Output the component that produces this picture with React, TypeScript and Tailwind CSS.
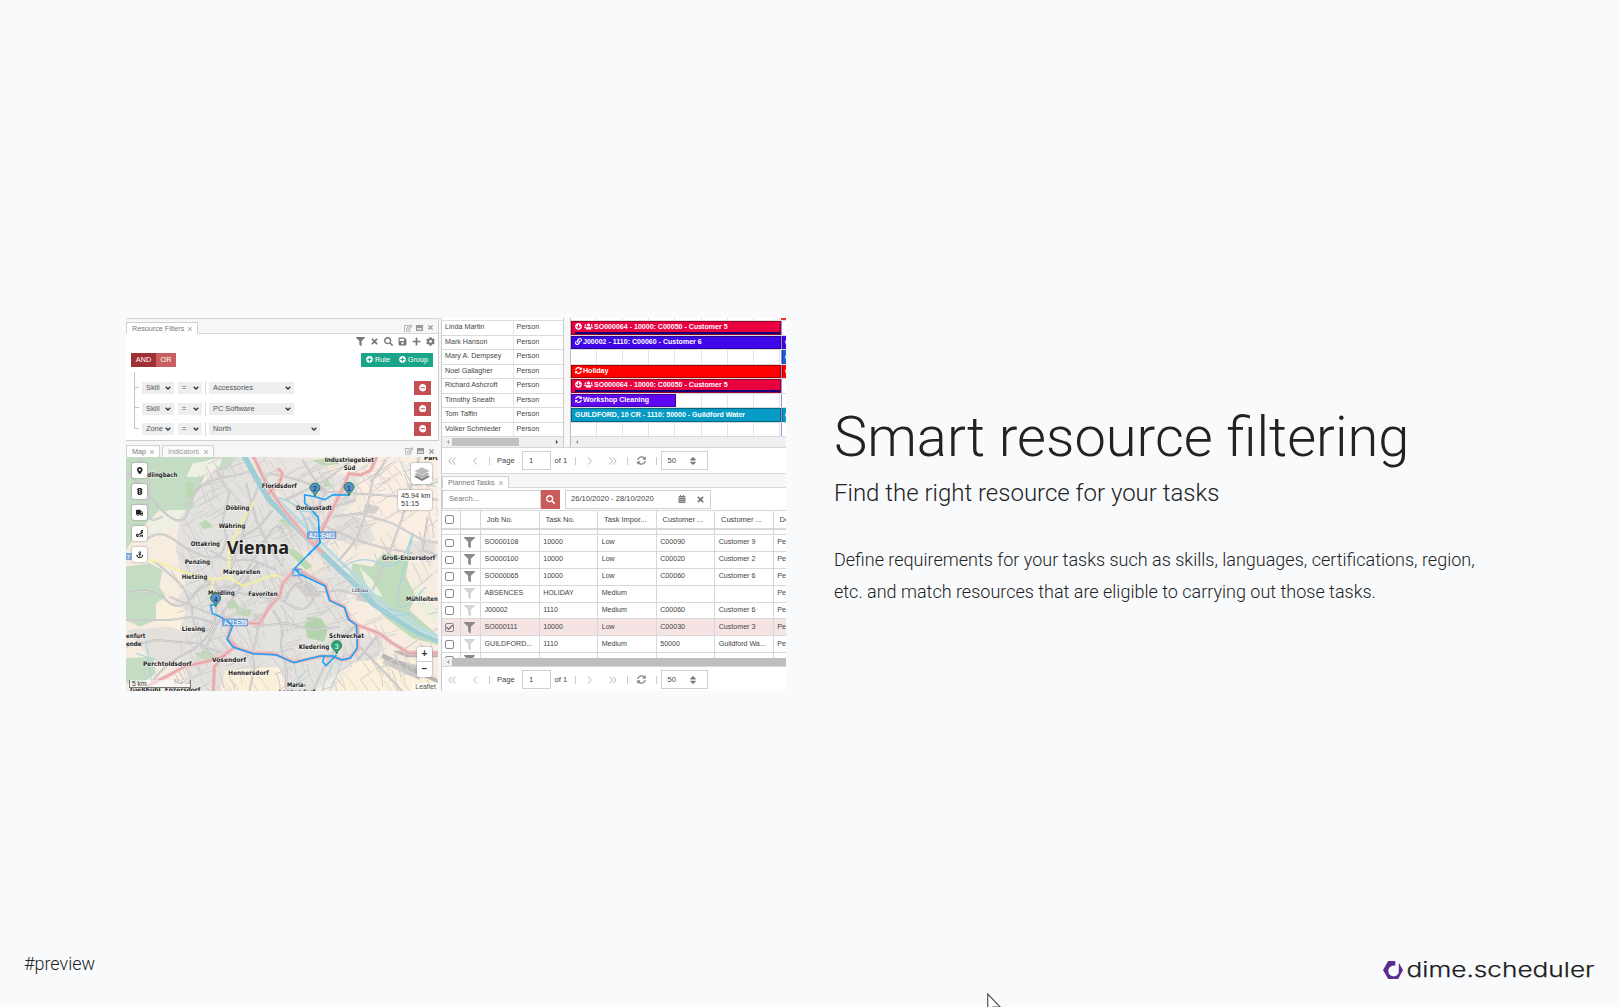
import React from "react";
import {
  FaFilter, FaTimes, FaSearch, FaSave, FaPlus, FaCog, FaPlusCircle, FaMinusCircle, FaSyncAlt,
  FaCalendarAlt, FaUsers, FaLink, FaMapMarkerAlt, FaTruck, FaRoute, FaAnchor, FaTrafficLight,
  FaArrowCircleDown, FaRegEdit, FaCaretLeft, FaCaretRight, FaCheck, FaSort,
} from "react-icons/fa";

function Tab({ label, width, active = true }: { label: string; width: string; active?: boolean }) {
  return (
    <div className={`${width} flex items-center justify-between border border-b-0 border-[#d0d0d0] pl-[5px] pr-[4px] text-[7.2px] ${active ? "bg-white text-[#777]" : "bg-[#fafafa] text-[#999]"}`}>
      <span>{label}</span>
      <FaTimes className="size-[6px] text-[#bbb]" />
    </div>
  );
}

function PanelTools() {
  return (
    <div className="ml-auto flex items-center gap-[4px] pr-[4px] text-[#999]">
      <FaRegEdit className="size-[8px]" />
      <div className="h-[6px] w-[7px] border border-[#999] border-t-[3px] bg-[#ddd]" />
      <FaTimes className="size-[7px]" />
    </div>
  );
}

function Select({ text, width }: { text: string; width: string }) {
  return (
    <div className={`${width} flex h-[12px] items-center justify-between bg-[#edeeef] pl-[4px] pr-[3px] text-[7.4px] text-[#555]`}>
      <span>{text}</span>
      <svg viewBox="0 0 6 4" className="h-[4px] w-[6px]"><path d="M0.700 0.700L3 3 5.300 0.700" fill="none" stroke="#333" strokeWidth="1.300" /></svg>
    </div>
  );
}

function Rule({ field, value, width, last = false }: { field: string; value: string; width: string; last?: boolean }) {
  return (
    <div className="flex h-[20.4px] items-center">
      <div className="flex h-full w-[8px] flex-col">
        <div className="h-[10px] w-[5px] border-b border-l border-[#c4c4c4]" />
        <div className={last ? "flex-1" : "w-[5px] flex-1 border-l border-[#c4c4c4]"} />
      </div>
      <Select text={field} width="w-[32px]" />
      <div className="w-[4px]" />
      <Select text="=" width="w-[24px]" />
      <div className="mx-[3px] h-[14px] w-px bg-[#ddd]" />
      <Select text={value} width={width} />
      <div className="ml-auto flex h-[14px] w-[17px] items-center justify-center bg-[#c54e52] text-white">
        <FaMinusCircle className="size-[7.5px]" />
      </div>
    </div>
  );
}

function Filters() {
  return (
    <section className="flex h-[123px] flex-col border-r border-b border-[#d0d0d0] bg-white">
      <div className="flex h-[16px] border-t border-b border-[#d8d8d8] bg-[#f6f6f6] pt-[3px]">
        <div className="-mb-px flex"><Tab label="Resource Filters" width="w-[72px]" /></div>
        <PanelTools />
      </div>
      <div className="flex h-[14px] items-center justify-end gap-[5px] pr-[3px] text-[#777]">
        <FaFilter className="size-[9px]" />
        <FaTimes className="size-[9px]" />
        <FaSearch className="size-[9px]" />
        <FaSave className="size-[9px]" />
        <FaPlus className="size-[9px]" />
        <FaCog className="size-[9px]" />
      </div>
      <div className="mt-[5px] flex h-[14px] justify-between pl-[5px] pr-[5px] text-[7.3px] text-white">
        <div className="flex">
          <div className="flex w-[25px] items-center justify-center bg-[#9f3033]">AND</div>
          <div className="flex w-[20px] items-center justify-center bg-[#c95f60]">OR</div>
        </div>
        <div className="flex w-[72px] items-center justify-between bg-[#19a589] px-[5px]">
          <span className="flex items-center gap-[2px]"><FaPlusCircle className="size-[7px]" />Rule</span>
          <span className="flex items-center gap-[2px]"><FaPlusCircle className="size-[7px]" />Group</span>
        </div>
      </div>
      <div className="flex flex-col pl-[8px] pr-[7px]">
        <div className="mt-[5px] h-[6px] w-px bg-[#c4c4c4]" />
        <Rule field="Skill" value="Accessories" width="w-[85px]" />
        <Rule field="Skill" value="PC Software" width="w-[85px]" />
        <Rule field="Zone" value="North" width="w-[111px]" last />
      </div>
    </section>
  );
}

const seeded = (seed: number) => () => {
  seed = (seed * 16807) % 2147483647;
  return seed / 2147483647;
};

/* Small street blocks scattered over the built-up area, in map units. */
const streets = (() => {
  const r = seeded(4211);
  let d = "";
  for (let i = 0; i < 420; i++) {
    const x = 130 + r() * 800;
    const y = 60 + r() * 690;
    const inCity = x + y * 0.2 > 210 && !(x > 640 && y > 330 && y < 560 && x - y < 380);
    if (!inCity || (x > 760 && r() > 0.4)) continue;
    const a = (r() > 0.5 ? 1.15 : -0.45) + (r() - 0.5) * 0.5;
    const l = 25 + r() * 60;
    d += `M${x.toFixed(0)} ${y.toFixed(0)}q${(Math.cos(a) * l * 0.5 + r() * 9).toFixed(0)} ${(Math.sin(a) * l * 0.5).toFixed(0)} ${(Math.cos(a) * l).toFixed(0)} ${(Math.sin(a) * l).toFixed(0)}`;
  }
  return d;
})();

const RIVER = "M350 40L400 130 430 180 490 240 560 310 620 370 680 425 740 490 800 530 870 575 945 605";
const MOTORWAYS =
  "M380 45L420 130 470 205 540 290 590 340M455 85l14 14-8 28-35 35M752 51l-18 40-30 14-36-4-12 30-28 60-30 60-28 60M510 385L470 430 462 465 425 510 400 552 360 548M510 385L545 405 600 435 612 480 655 500 672 540 695 555 760 580 800 610 850 640 945 640M262 755L265 680 300 640 330 618 305 595 315 560 290 530M300 645L240 665 175 680 120 710 60 740M320 618L380 640 440 640 505 666 590 648 660 660 695 630 695 555";

const MINOR =
  "M0 95Q60 150 90 190T150 240 190 200 240 130 300 110 370 95M40 51Q80 120 66 190T110 230M60 300Q100 265 145 300T240 350 300 300M80 360Q130 400 160 430T200 530 260 560M0 460Q80 440 120 480T200 470 270 440 370 420M0 540H130L200 530 270 550M0 620L90 600 210 610 290 640M60 755Q100 680 180 640T270 520 310 440 400 330 470 280M230 640L290 520 350 430 395 370M370 755L385 680 380 640 400 552 440 470M480 755L482 690 465 620 470 555 440 510M560 755L590 690 650 590 690 555M400 130L370 210 345 300 310 400M430 100L520 120 600 155 760 165 945 180M530 60L560 110 600 155 560 230M480 180L600 120 680 60M600 260L690 300 760 320 860 340M620 230L700 220 800 250 890 300 945 310M880 51L860 120 830 230 790 340 740 450M780 60L740 120 720 220 690 300 640 360M905 230L890 330 945 350M560 310L620 200 690 180M695 660L760 580M700 620L760 680 830 755M510 400L560 460 640 450 720 470M480 480Q500 420 540 430T560 480 500 500 460 470M380 560L480 550 560 570 640 560M250 330L300 360 380 360 450 390M200 400L290 450 400 470 480 480M270 90L310 160 290 240 310 330M360 130L390 240 430 320 470 380M440 210L400 260 350 290M130 470L250 520 360 548";

const places: [string, number, number, number][] = [
  ["dlingbach", 64, 112, 90], ["Floridsdorf", 407, 144, 105], ["Industriegebiet", 596, 65, 148], ["Süd", 653, 89, 35],
  ["Döbling", 299, 210, 71], ["Donaustadt", 510, 210, 108], ["Währing", 278, 264, 80],
  ["Ottakring", 194, 317, 88], ["Penzing", 176, 373, 76], ["Groß-Enzersdorf", 768, 360, 160], ["Hietzing", 167, 418, 77],
  ["Margareten", 291, 402, 112], ["Favoriten", 367, 469, 88], ["Meidling", 246, 466, 80], ["Mühlleiten", 840, 482, 95],
  ["Liesing", 167, 572, 71], ["enfurt", 0, 595, 58], ["ende", 0, 619, 47], ["Schwechat", 609, 593, 105], ["Kledering", 518, 626, 92],
  ["Vösendorf", 258, 665, 102], ["Perchtoldsdorf", 51, 679, 146], ["Hennersdorf", 307, 705, 121], ["Maria-", 483, 740, 56],
];
const edgePlaces: [string, number, number, number][] = [
  ["Parti", 894, 60, 48], ["Gießhübl", 12, 757, 92], ["Enzersdorf", 116, 757, 107], ["Lanzendorf", 458, 763, 110],
];

function Pin({ x, y, n, green = false }: { x: number; y: number; n: string; green?: boolean }) {
  return (
    <g>
      <path d={`M${x} ${y}c-2-13-15-14-15-25a15 15 0 0 1 30 0c0 11-13 12-15 25z`} fill={green ? "#2ba57b" : "#5a8fd0"} stroke="#1b8a3c" strokeWidth="3" />
      <text x={x} y={y - 15} fontSize="21" textAnchor="middle" fill={green ? "#fff" : "#123"} fontFamily="Liberation Sans, sans-serif">{n}</text>
    </g>
  );
}

function MapView() {
  return (
    <svg viewBox="0 51 936 702" className="block h-[234px] w-[312px]">
      <rect y="51" width="940" height="710" fill="#f6ecdf" />
      {/* built-up area */}
      <path d="M160 230L290 51 360 51 420 150 620 360 690 430 640 500 700 560 690 660 560 755 200 755 150 620 120 520 180 440 150 330z" fill="#e4e2de" />
      <path d="M390 51L560 55 620 100 700 110 690 180 640 230 600 320 540 290z" fill="#e8e5e0" />
      <path d="M0 570l130-10 60 60-50 60-60-20zM620 210l100 30 30 60-60 20-70-30zM850 300l80 10-10 60-80-20zM700 575l70 30-20 60-60 10z" fill="#e4e0dc" />
      <path d="M700 51h240v230l-110 10-70-90-50-30z" fill="#fbeee2" />
      <path d="M500 320l110 40-20 50-80-20zM560 190l50 20 0 40-45-10z" fill="#efe7db" />
      <path d="M700 660h180l60 60v35H620zM300 690l160-10 20 75H280zM120 480l60 30-20 60-80-30z" fill="#fbf0d9" />
      {/* forest and parks */}
      <path d="M0 51h330l-30 40-50-10-20 40-30 60 10 20-50 20-60-10-60 60-40 60H0z" fill="#c3dcc3" />
      <path d="M290 51l-10 30-60 30-40 0 20-40zM70 240l60-30 50 0-50 60-60 20z" fill="#eef0e2" />
      <path d="M0 380l70-10 40 20-10 50 20 30-30 20 0 50-50 20-40-20zM0 655l80-5 10 50-40 30H0z" fill="#c3dcc3" />
      <path d="M680 370l60 10 30-40 80 10-10 60 30 60-20 40 90 80v25l-80-20-80-60-110-120z" fill="#c0dcbc" />
      <path d="M700 380l40 40 30 50-40-10zM860 420l70 90v40l-60-60z" fill="#eaf0dc" />
      <path d="M545 530l40 5 20 30-10 40-50-10-10-40z" fill="#b3d3ac" />
      <path d="M470 320l40 10 50 50-20 10zM220 250l20-10 22 20-30 8zM330 500l50 10-10 20-40-6zM300 485l25-5 15 20-30 10zM560 60l70-8 10 20-50 6zM460 240l30-10 10 30-25 0zM180 130l20-4 4 40-24 10zM600 110l20 30-30 0zM210 640l40-10 20 20-40 10z" fill="#bbd9ae" />
      <path d="M500 430l60 10 30 30-50 0zM720 190l40 10-10 20-40 0zM380 520l30 0 6 40-30 0zM700 440l40 20-10 30-40-10z" fill="#d2cfcd" />
      <path d="M780 650l110 30-10 40-110-50z" fill="#cac8c6" />
      <path d="M770 640l170 80-3 10-170-76zM800 632h140v20H840z" fill="#b7b6b5" />
      {/* streets */}
      <path d={streets} fill="none" stroke="#cfcecd" strokeWidth="3" />
      <path d={streets} transform="translate(22 -16)" fill="none" stroke="#d6d4d3" strokeWidth="2.5" />
      <path d={MINOR} fill="none" stroke="#bdbcbe" strokeWidth="6" />
      <path d={MINOR} fill="none" stroke="#dddbdc" strokeWidth="3" />
      <path d="M66 358L110 370 165 395 260 418 310 412 350 438 400 420 440 405 465 410M255 455L262 418M310 412L308 330 350 240 385 185" fill="none" stroke="#f4f0a0" strokeWidth="6" />
      {/* water */}
      <g fill="none" strokeLinejoin="round" stroke="#a9d3df">
        <path d={RIVER} stroke="#9fced6" strokeWidth="17" />
        <path d={RIVER} transform="translate(24 -4)" stroke="#b9dce4" strokeWidth="9" />
        <path d={RIVER} transform="translate(12 -2)" stroke="#dfe9e2" strokeWidth="3" />
        <path d="M440 170Q520 180 540 250T510 260 470 200M545 235q30 20 20 60M520 215q40 -10 60 30" strokeWidth="5" />
        <path d="M640 390Q700 340 760 370T850 310 830 400 900 440M660 410Q720 440 750 490T850 520M770 510q60-10 100 30" strokeWidth="4" />
        <path d="M640 650Q600 690 590 755M655 640Q640 700 610 755M540 690l-50 65M60 600L80 755M30 640l60 20M820 60l30 60 80 20" strokeWidth="3" />
      </g>
      {/* motorways */}
      <g fill="none" strokeLinejoin="round">
        <path d={MOTORWAYS} stroke="#eebfc0" strokeWidth="12" />
        <path d={MOTORWAYS} stroke="#dd9094" strokeWidth="2.5" />
      </g>
      {/* driving route */}
      <path d="M669 165L621 164 597 179 567 170 536 164 536 188 577 232 582 308 505 386 522 402 597 438 611 482 655 502 667 538 691 555 694 622 674 654 646 660 622 648 582 648 502 668 452 645 382 641 322 622 303 598 320 558 282 530 259 520 254 496 268 494M631 645L600 677 590 665 594 650" fill="none" stroke="#16a0f8" strokeWidth="4.5" strokeLinejoin="round" />
      <g fontFamily="Liberation Sans, sans-serif" fontSize="19" fontWeight="bold" fill="#fff" fillOpacity="0.9">
        <rect x="543" y="274" width="88" height="23" fill="#6f9dd6" /><text x="548" y="293" textLength="79">A23;E461</text>
        <rect x="499" y="386" width="28" height="23" fill="#6f9dd6" /><text x="502" y="405">A4</text>
        <rect x="288" y="536" width="78" height="23" fill="#6f9dd6" /><text x="293" y="555" textLength="70">A21;E59</text>
        <rect x="-10" y="339" width="27" height="21" fill="#6f9dd6" /><text x="2" y="357" fontSize="17">7</text>
      </g>
      <path d="M577 260L582 308 545 346M505 386L522 402 540 411M320 558L300 540" fill="none" stroke="#16a0f8" strokeWidth="4.500" />
      <g fontFamily="DejaVu Sans, sans-serif" fontSize="19" fontWeight="bold" fill="#222" stroke="#fff" strokeOpacity="0.6" strokeWidth="4" paintOrder="stroke">
        {places.concat(edgePlaces).map(([t, x, y, w]) => <text key={t} x={x} y={y} textLength={w} lengthAdjust="spacingAndGlyphs">{t}</text>)}
        <text x="302" y="343" fontFamily="Noto Sans, sans-serif" fontSize="54" textLength="187" lengthAdjust="spacingAndGlyphs">Vienna</text>
        <text x="677" y="455" fontWeight="normal" fontSize="18" fill="#445" textLength="49">Lobau</text>
        <text x="143" y="732" fontWeight="normal" fontSize="19" fill="#444" textLength="52">Maria</text>
      </g>
      <Pin x={567} y={169} n="2" />
      <Pin x={669} y={167} n="1" />
      <Pin x={269} y={500} n="4" />
      <Pin x={632} y={642} n="3" green />
    </svg>
  );
}

function MapPanel() {
  const tools = [FaMapMarkerAlt, FaTrafficLight, FaTruck, FaRoute, FaAnchor];
  return (
    <section className="flex h-[250px] flex-col">
      <div className="flex h-[16px] gap-[2px] bg-[#f6f6f6] pt-[4px]">
        <Tab label="Map" width="w-[34px]" />
        <Tab label="Indicators" width="w-[52px]" active={false} />
        <PanelTools />
      </div>
      <div className="relative">
        <MapView />
        <div className="absolute top-[6px] left-[6px] flex flex-col gap-[6px]">
          {tools.map((Icon, i) => (
            <div key={i} className="flex size-[15px] items-center justify-center rounded-[2px] bg-white shadow-[0_0_2px_#777]">
              <Icon className="size-[7.5px] text-[#222]" />
            </div>
          ))}
        </div>
        <div className="absolute top-[6px] right-[7px] flex size-[21px] items-center justify-center rounded-[3px] bg-white shadow-[0_0_2px_#777]">
          <svg viewBox="0 0 18 18" className="size-[18px]">
            <path d="M9 7.500l8 4-8 4.500-8-4.500z" fill="#777" />
            <path d="M9 5l8 4-8 4.500-8-4.500z" fill="#aaa" stroke="#fff" strokeWidth="0.500" />
            <path d="M9 2l8 4-8 4.500-8-4.500z" fill="#bbb" stroke="#fff" strokeWidth="0.500" />
          </svg>
        </div>
        <div className="absolute top-[33px] right-[7px] flex h-[20px] w-[34px] flex-col justify-center rounded-[2px] bg-white pl-[3px] text-[7.2px] leading-[8.500px] whitespace-nowrap text-[#333] shadow-[0_0_2px_#777]">
          <span>45.94 km</span>
          <span>51:15</span>
        </div>
        <div className="absolute right-[7px] bottom-[14px] flex w-[15px] flex-col rounded-[2px] bg-white text-center text-[10px] font-bold text-[#333] shadow-[0_0_2px_#777]">
          <span className="h-[15px] border-b border-[#ccc] leading-[14px]">+</span>
          <span className="h-[15px] leading-[14px]">−</span>
        </div>
        <div className="absolute right-0 bottom-0 bg-white/75 px-[3px] text-[6.9px] leading-[8px] text-[#555]">Leaflet</div>
        <div className="absolute bottom-[3px] left-[3px] h-[8px] w-[62px] border border-t-0 border-[#777] bg-white/50 pl-[2px] text-[6.7px] leading-[8px] text-[#333]">5 km</div>
      </div>
    </section>
  );
}

type Bar = { label?: string; color?: string; width?: string; icons?: "alert" | "link" | "sync"; load?: boolean; tail?: string };
const people: [string, Bar][] = [
  ["Linda Martin", { label: "SO000064 - 10000: C00050 - Customer 5", color: "bg-[#e9013f]", icons: "alert", load: true }],
  ["Mark Hanson", { label: "J00002 - 1110: C00060 - Customer 6", color: "bg-[#3f06ea]", icons: "link", tail: "bg-[#3f06ea]" }],
  ["Mary A. Dempsey", { tail: "bg-[#1565e0]" }],
  ["Noel Gallagher", { label: "Holiday", color: "bg-[#ff0000]", icons: "sync", tail: "bg-[#ff0000]" }],
  ["Richard Ashcroft", { label: "SO000064 - 10000: C00050 - Customer 5", color: "bg-[#e9013f]", icons: "alert", load: true }],
  ["Timothy Sneath", { label: "Workshop Cleaning", color: "bg-[#5e06f0]", width: "w-[105px]", icons: "sync" }],
  ["Tom Taffin", { label: "GUILDFORD, 10 CR - 1110: 50000 - Guildford Water", color: "bg-[#069bc4]", tail: "bg-[#069bc4]" }],
  ["Volker Schmieder", {}],
];

function Scheduler() {
  return (
    <div className="flex h-[129px] shrink-0 bg-white">
      <div className="flex w-[122px] flex-col border-r border-[#ccc]">
        <div className="h-[3px] border-b border-[#ddd]" />
        {people.map(([name]) => (
          <div key={name} className="flex h-[14.550px] shrink-0 items-center border-b border-[#dadada] text-[7.150px] text-[#444]">
            <div className="flex h-full w-[71.500px] items-center border-r border-[#e5e5e5] pl-[3px]">{name}</div>
            <div className="pl-[3px]">Person</div>
          </div>
        ))}
        <div className="flex flex-1 items-center justify-between bg-[#f0f0f0] px-[3px] text-[#444]">
          <FaCaretLeft className="size-[6px] text-[#999]" />
          <div className="mr-auto ml-[1px] h-[8px] w-[67px] bg-[#c1c1c1]" />
          <FaCaretRight className="size-[6px]" />
        </div>
      </div>
      <div className="w-[7px] border-r border-[#bbb] bg-[#f8f8f8]" />
      <div className="flex flex-1 flex-col overflow-hidden bg-[repeating-linear-gradient(to_right,#fff_0,#fff_25.100px,#e4e4e4_25.100px,#e4e4e4_26.100px)]">
        <div className="flex h-[3px] justify-end border-b border-[#ddd]"><div className="w-[5px] bg-[#e33]" /></div>
        {people.map(([name, b]) => (
          <div key={name} className="flex h-[14.550px] shrink-0 border-b border-[#dadada] text-[7.050px] font-bold text-white">
            <div className="flex w-[211px] border-r border-[#9b8ee0]">
              {b.label && (
                <div className={`${b.width ?? "w-full"} ${b.color} relative flex h-[13.500px] items-center gap-[1px] border border-black/35 pb-[2px] pl-[3px] whitespace-nowrap`}>
                  {b.icons === "alert" && <><FaArrowCircleDown className="size-[7px]" /><FaUsers className="ml-[1px] h-[7px] w-[9px]" /></>}
                  {b.icons === "link" && <FaLink className="size-[7px]" />}
                  {b.icons === "sync" && <FaSyncAlt className="size-[7px]" />}
                  <span>{b.label}</span>
                  {b.load && <div className="absolute right-0 bottom-0 left-[3px] h-[2px] bg-[#14007c]" />}
                </div>
              )}
            </div>
            {b.tail && <div className={`${b.tail} flex h-[13.500px] flex-1 items-center overflow-hidden border-l border-black/30 pl-[2px]`}><div className="size-[4px] shrink-0 rounded-full bg-white/80" /></div>}
          </div>
        ))}
        <div className="flex flex-1 items-center bg-[#f0f0f0] pl-[3px] text-[#999]"><FaCaretLeft className="size-[6px]" /></div>
      </div>
    </div>
  );
}

function Chevrons({ double = false, flip = false }: { double?: boolean; flip?: boolean }) {
  return (
    <svg viewBox="0 0 8 8" className={`size-[8px] ${flip ? "rotate-180" : ""}`} fill="none" stroke="#aaa" strokeWidth="0.900">
      <path d={double ? "M4 0.500L0.800 4 4 7.500M7.500 0.500L4.300 4l3.200 3.500" : "M6 0.500L2.500 4 6 7.500"} />
    </svg>
  );
}

function Pager({ height }: { height: string }) {
  const bar = "h-[8px] w-px shrink-0 bg-[#ccc]";
  return (
    <div className={`${height} flex shrink-0 items-center border-t border-[#d8d8d8] bg-white pl-[6px] text-[7.600px] text-[#444]`}>
      <div className="w-[23px]"><Chevrons double /></div>
      <div className="w-[18px]"><Chevrons /></div>
      <div className={bar} />
      <span className="w-[32px] pl-[7px]">Page</span>
      <div className="flex h-[18.500px] w-[28.500px] items-center border border-[#d0d0d0] pl-[6px]">1</div>
      <span className="w-[24px] pl-[4px] whitespace-nowrap">of 1</span>
      <div className={bar} />
      <div className="w-[21px] pl-[10px]"><Chevrons flip /></div>
      <div className="w-[30px] pl-[12px]"><Chevrons double flip /></div>
      <div className={bar} />
      <FaSyncAlt className="ml-[9px] size-[9px] text-[#888]" />
      <div className={`${bar} ml-[10px]`} />
      <div className="ml-[4px] flex h-[18.500px] w-[47px] items-center justify-between border border-[#d0d0d0] pr-[10px] pl-[6px]">
        50
        <FaSort className="h-[10px] w-[8px] text-[#777]" />
      </div>
    </div>
  );
}

const tasks: [string, string, string, string, string, boolean][] = [
  ["SO000108", "10000", "Low", "C00090", "Customer 9", true],
  ["SO000100", "10000", "Low", "C00020", "Customer 2", true],
  ["SO000065", "10000", "Low", "C00060", "Customer 6", true],
  ["ABSENCES", "HOLIDAY", "Medium", "", "", false],
  ["J00002", "1110", "Medium", "C00060", "Customer 6", false],
  ["SO000111", "10000", "Low", "C00030", "Customer 3", true],
  ["GUILDFORD...", "1110", "Medium", "50000", "Guildford Wa...", false],
];
const cols = "grid grid-cols-[19px_20px_58.700px_58.500px_58.500px_58.500px_58.500px_40px]";

function Box({ on = false }: { on?: boolean }) {
  return (
    <div className="ml-[3px] flex size-[8.500px] items-center justify-center rounded-[2px] border border-[#8a8a8a]">
      {on && <FaCheck className="size-[7px] shrink-0 text-[#777]" />}
    </div>
  );
}

function Tasks() {
  return (
    <div className="flex flex-1 flex-col">
      <div className="flex h-[15px] shrink-0 border-t border-b border-[#d8d8d8] bg-[#f6f6f6] pt-[2px]">
        <div className="-mb-px flex"><Tab label="Planned Tasks" width="w-[67px]" /></div>
      </div>
      <div className="flex h-[22px] shrink-0 items-center bg-white text-[7.500px]">
        <div className="flex h-[19px] w-[99px] items-center border border-[#d0d0d0] pl-[6px] text-[#777]">Search...</div>
        <div className="flex h-[19px] w-[19px] items-center justify-center bg-[#c95b5b] text-white"><FaSearch className="size-[9px]" /></div>
        <div className="ml-[5px] flex h-[19px] w-[146px] items-center border border-[#d0d0d0] pl-[5px] text-[7.600px] text-[#444]">
          <span className="w-[107px]">26/10/2020 - 28/10/2020</span>
          <FaCalendarAlt className="size-[8px] text-[#777]" />
          <FaTimes className="ml-[10px] size-[9px] text-[#777]" />
        </div>
      </div>
      <div className={`${cols} h-[20px] shrink-0 border-t border-[#d8d8d8] border-b-2 bg-white text-[7.500px] text-[#444]`}>
        {["box", "", "Job No.", "Task No.", "Task Impor...", "Customer ...", "Customer ...", "De"].map((t, i) => (
          <div key={i} className={`flex items-center border-r border-[#d8d8d8] ${i > 0 ? "pl-[5.800px]" : ""}`}>{t === "box" ? <Box /> : t}</div>
        ))}
      </div>
      <div className="flex h-[128px] shrink-0 flex-col overflow-hidden">
        <div className={`${cols} h-[5px] shrink-0 border-b border-[#d8d8d8] bg-white`}>
          {[0, 1, 2, 3, 4, 5, 6].map((i) => <div key={i} className="border-r border-[#d8d8d8]" />)}
        </div>
        {tasks.map((t, n) => (
          <div key={n} className={`${cols} h-[16.900px] shrink-0 border-b border-[#d8d8d8] text-[7.100px] text-[#444] ${n === 5 ? "bg-[#f6e4e4]" : "bg-white"}`}>
            <div className="flex items-center border-r border-[#d8d8d8]"><Box on={n === 5} /></div>
            <div className="flex items-center justify-center border-r border-[#d8d8d8] pr-[2px]">
              <FaFilter className={`size-[11px] ${t[5] ? "text-[#8a8a8a]" : "text-[#d5d5d5]"}`} />
            </div>
            {[t[0], t[1], t[2], t[3], t[4], "Pe"].map((c, i) => (
              <div key={i} className="flex items-center border-r border-[#d8d8d8] pl-[3.500px] whitespace-nowrap">{c}</div>
            ))}
          </div>
        ))}
        <div className={`${cols} h-[16.900px] shrink-0 bg-white`}>
          <div className="border-r border-[#d8d8d8] pt-[3px]"><Box /></div>
          <div className="flex justify-center border-r border-[#d8d8d8] pt-[2px] pr-[2px]"><FaFilter className="size-[11px] text-[#8a8a8a]" /></div>
          {[0, 1, 2, 3, 4].map((i) => <div key={i} className="border-r border-[#d8d8d8]" />)}
        </div>
      </div>
      <div className="flex h-[8px] shrink-0 items-center bg-[#f0f0f0] pl-[3px] text-[#999]">
        <FaCaretLeft className="size-[6px]" />
        <div className="ml-px h-[8px] flex-1 bg-[#bebebe]" />
      </div>
    </div>
  );
}

function Logo() {
  return (
    <svg viewBox="0 0 215 24" className="h-[24px] w-[215px]">
      <path d="M14.300 3H7.200L2 12l5.200 9h10L22 12 17.800 4.700V14.500a5.400 5.400 0 1 1-3.500-6.700z" fill="#5b2d91" />
      <text x="25.500" y="19" fontFamily="Inter, sans-serif" fontSize="20.500" fontWeight="300" fill="#1d1d1d" stroke="#1d1d1d" strokeWidth="0.250" textLength="188" lengthAdjust="spacingAndGlyphs">dime.scheduler</text>
    </svg>
  );
}

export default function App() {
  return (
    <div className="relative flex h-[1007px] w-[1620px] flex-col overflow-hidden bg-[#f8fafc] font-['Roboto',sans-serif] text-[#222]">
      <main className="flex flex-1 pt-[318px] pl-[126px]">
        <div className="flex h-[373px] w-[660px] overflow-hidden bg-[#f6f6f6] font-['Liberation_Sans',Arial,sans-serif] leading-none">
          <div className="flex w-[313px] flex-col">
            <Filters />
            <MapPanel />
          </div>
          <div className="ml-[2px] flex w-[345px] flex-col overflow-hidden border-l border-[#ccc]">
            <Scheduler />
            <Pager height="h-[26px]" />
            <Tasks />
            <Pager height="h-[25px] pt-[1px]" />
          </div>
        </div>
        <div className="ml-[48px] pt-[84px] font-light">
          <h1 className="text-[56px] leading-[70px]">Smart resource filtering</h1>
          <p className="mt-[5px] text-[24px] leading-[32px]">Find the right resource for your tasks</p>
          <p className="mt-[35px] text-[18px] leading-[32px] whitespace-nowrap">
            Define requirements for your tasks such as skills, languages, certifications, region,<br />
            etc. and match resources that are eligible to carrying out those tasks.
          </p>
        </div>
      </main>
      <footer className="flex h-[74px] items-start justify-between pr-[24px] pl-[24px]">
        <span className="pt-[18px] text-[18px] leading-[26px] font-light">#preview</span>
        <div className="pt-[25px]"><Logo /></div>
      </footer>
      <svg viewBox="0 0 14 20" className="absolute top-[993px] left-[987px] h-[20px] w-[14px]">
        <path d="M0.700 1v18l5-5h7.500z" fill="#fff" stroke="#555" strokeWidth="1.200" />
      </svg>
    </div>
  );
}
